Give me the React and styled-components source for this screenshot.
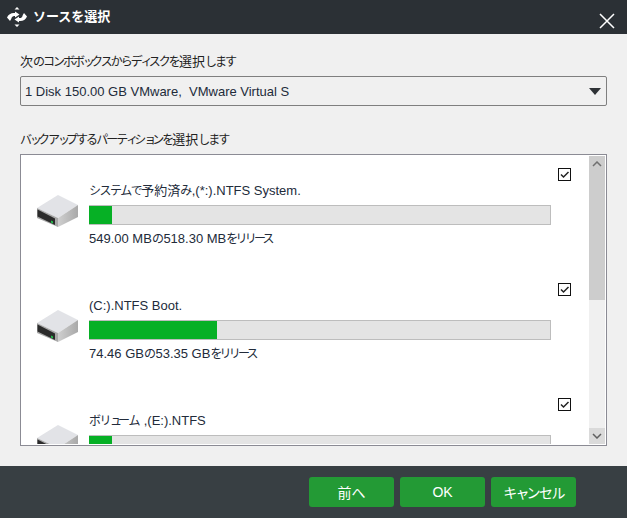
import React from "react";
import styled, { createGlobalStyle } from "styled-components";

const Global = createGlobalStyle`
  html, body { margin: 0; padding: 0; }
  body { font-family: "Liberation Sans", "Noto Sans CJK JP", sans-serif; background: #f0f0f0; }
  * { box-sizing: border-box; }
`;
const Dialog = styled.div`
  width: 627px; height: 518px; display: flex; flex-direction: column; background: #f0f0f0; overflow: hidden;
`;
const TitleBar = styled.header`
  height: 34px; flex: none; background: #2b3035; display: flex; align-items: center; padding: 0 12px 0 7px; color: #fff;
`;
const Title = styled.h1`
  margin: 0 0 0 6px; font-size: 13px; font-weight: 700; line-height: 34px; flex: 1;
`;
const CloseButton = styled.button`
  width: 16px; height: 16px; padding: 0; margin-top: 7px; border: 0; background: none; display: flex;
`;
const Main = styled.main`
  flex: 1; min-height: 0; padding: 20px 20px 20px; display: flex; flex-direction: column;
`;
const Label = styled.div`
  font-size: 13px; line-height: 16px; color: #222; height: 16px; white-space: nowrap;
`;
const Kana = styled.span`
  font-size: ${p => p.$size || 12}px;
  letter-spacing: ${p => p.$tracking}px;
`;
const Select = styled.div`
  margin-top: 6px; width: 587px; height: 30px; flex: none; border: 1px solid #7f7f7f; border-radius: 2px; background: #f0f0f0;
  display: flex; align-items: center; justify-content: space-between; padding: 0 3px 0 4px; font-size: 13px; color: #222b3a;
`;
const Caret = styled.span`
  width: 0; height: 0; border-left: 6.5px solid transparent; border-right: 6.5px solid transparent; border-top: 7px solid #2e3236; margin-right: 2px;
`;
const SecondLabel = styled(Label)`
  margin-top: 26px;
`;
const ListBox = styled.div`
  margin-top: 6px; width: 587px; height: 292px; flex: none; border: 1px solid #8b8b94; background: #fff; display: flex; overflow: hidden; padding: 1px;
`;
const Rows = styled.div`
  flex: 1; min-width: 0; overflow: hidden;
`;
const Row = styled.div`
  height: 115px; flex: none; display: flex; padding: 12px 0 0 14px;
`;
const DriveWrap = styled.div`
  width: 44px; flex: none; padding-top: 27px;
  svg { display: block; }
`;
const Info = styled.div`
  width: 462px; margin-left: 9px; padding-top: 15px; flex: none;
`;
const Name = styled.div`
  font-size: 13px; line-height: 16px; height: 16px; color: #222b3a; white-space: nowrap;
`;
const Track = styled.div`
  margin-top: 6px; height: 20px; background: #e4e4e4; border: 1px solid #bdbdbd; border-left: 0; display: flex;
`;
const Fill = styled.div`
  background: #06b025; height: 18px;
`;
const Usage = styled.div`
  margin-top: 6px; font-size: 13px; line-height: 16px; color: #222b3a; white-space: nowrap;
`;
const Check = styled.span`
  width: 13px; height: 13px; margin: 0 0 0 7px; flex: none; border: 1px solid #111; background: #fff; display: flex;
  svg { display: block; }
`;
const ScrollBar = styled.div`
  width: 16px; flex: none; background: #f0f0f0; display: flex; flex-direction: column;
`;
const Arrow = styled.div`
  height: 16px; flex: none; display: flex; align-items: center; justify-content: center; background: ${p => p.$bg};
`;
const Thumb = styled.div`
  height: 128px; flex: none; background: #cdcdcd;
`;
const Spacer = styled.div`flex: 1;`;
const Footer = styled.footer`
  height: 52px; flex: none; background: #383f43; display: flex; gap: 6px; padding: 11px 51px 0 309px;
`;
const Button = styled.button`
  width: 85px; height: 30px; border: 0; border-radius: 3px; padding: 0; background: #239a35; color: #fff;
  font: 400 14px "Liberation Sans", "Noto Sans CJK JP", sans-serif;
`;

/* Meiryo UI sets kana narrower than kanji; reproduce that with tighter tracking on kana runs. */
const Jp = ({ text, size, spacing = -2, smallSpacing = -4 }) => {
  const parts = text.split(/([\u3041-\u30ff]+)/);
  return parts.map((part, i) => {
    if (i % 2 === 0) return part;
    const beforeLatin = /^[\x20-\x7e]/.test(parts[i + 1] || "");
    const chars = [...part];
    return chars.map((ch, j) => {
      let tracking = /[ッィャュョ]/.test(ch) ? smallSpacing : spacing;
      if (beforeLatin && j === chars.length - 1) tracking = -0.5;
      return (
        <Kana key={`${i}-${j}`} $size={size} $tracking={tracking}>
          {ch}
        </Kana>
      );
    });
  });
};

const Logo = () => (
  <svg width="20" height="20" viewBox="0 0 20 20" fill="#fff">
    <path d="M0 10.500C1.500 7 4.500 5.500 8 6V4.500l4.500 3-4.500 3V9C6 8.700 5 9.500 4.300 11.500H4.500L3 14z" />
    <path d="M20 9.500C18.500 13 15.500 14.500 12 14v1.500l-4.500-3 4.500-3V11c2 .3 3-.5 3.700-2.500H15.500L17 6z" />
    <path d="M10 0 12.500 2.500H7.500zM10 20 12.500 17.500H7.500z" />
  </svg>
);

const Drive = () => (
  <svg width="43" height="34" viewBox="0 0 43 34">
    <defs>
      <linearGradient id="side" x1="0" y1="0" x2="1" y2="0">
        <stop offset="0" stopColor="#cfcfcf" />
        <stop offset="1" stopColor="#a9a9a9" />
      </linearGradient>
    </defs>
    <path d="M1 13 22 0 42 10 22 23z" fill="#e2e3e7" />
    <path d="M22 23 42 10V22L22 32z" fill="url(#side)" />
    <path d="M1 13 22 23V32L1 23z" fill="#a8a8a8" />
    <path d="M1.500 14.500 19 23.500V30L1.500 21.500z" fill="#2b2b2b" />
    <path d="M15 25.500l2 1v2l-2-1z" fill="#22c24c" />
  </svg>
);

const CheckMark = () => (
  <svg width="11" height="11" viewBox="0 0 11 11" fill="none">
    <path d="M2 5.500 4.500 8 9.500 3" stroke="#222" strokeWidth="1.500" />
  </svg>
);

const rows = [
  { name: "システムで予約済み,(*:).NTFS System.", pct: 4.9, usage: "549.00 MBの518.30 MBをリリース" },
  { name: "(C:).NTFS Boot.", pct: 27.7, usage: "74.46 GBの53.35 GBをリリース" },
  { name: "ボリューム ,(E:).NTFS", pct: 4.9, usage: "" },
];

export default function App() {
  return (
    <>
      <Global />
      <Dialog>
        <TitleBar>
          <Logo />
          <Title>ソースを選択</Title>
          <CloseButton aria-label="閉じる">
            <svg width="16" height="16" viewBox="0 0 16 16" stroke="#fff" strokeWidth="1.500" fill="none">
              <path d="M1 1l14 14M15 1 1 15" />
            </svg>
          </CloseButton>
        </TitleBar>
        <Main>
          <Label><Jp text="次のコンボボックスからディスクを選択します" /></Label>
          <Select>
            <span>1 Disk 150.00 GB VMware,&nbsp; VMware Virtual S</span>
            <Caret />
          </Select>
          <SecondLabel><Jp text="バックアップするパーティションを選択します" /></SecondLabel>
          <ListBox>
            <Rows>
              {rows.map(r => (
                <Row key={r.name}>
                  <DriveWrap><Drive /></DriveWrap>
                  <Info>
                    <Name><Jp text={r.name} spacing={-1.5} /></Name>
                    <Track><Fill style={{ width: `${r.pct}%` }} /></Track>
                    <Usage><Jp text={r.usage} spacing={-2.8} /></Usage>
                  </Info>
                  <Check><CheckMark /></Check>
                </Row>
              ))}
            </Rows>
            <ScrollBar>
              <Arrow $bg="#cdcdcd">
                <svg width="10" height="6" viewBox="0 0 10 6" fill="none" stroke="#707070" strokeWidth="1.500"><path d="M1 5l4-4 4 4" /></svg>
              </Arrow>
              <Thumb />
              <Spacer />
              <Arrow $bg="#dadada">
                <svg width="10" height="6" viewBox="0 0 10 6" fill="none" stroke="#606060" strokeWidth="1.500"><path d="M1 1l4 4 4-4" /></svg>
              </Arrow>
            </ScrollBar>
          </ListBox>
        </Main>
        <Footer>
          <Button><Jp text="前へ" size={14} spacing={0} /></Button>
          <Button>OK</Button>
          <Button><Jp text="キャンセル" size={14} spacing={-1.6} smallSpacing={-3} /></Button>
        </Footer>
      </Dialog>
    </>
  );
}
